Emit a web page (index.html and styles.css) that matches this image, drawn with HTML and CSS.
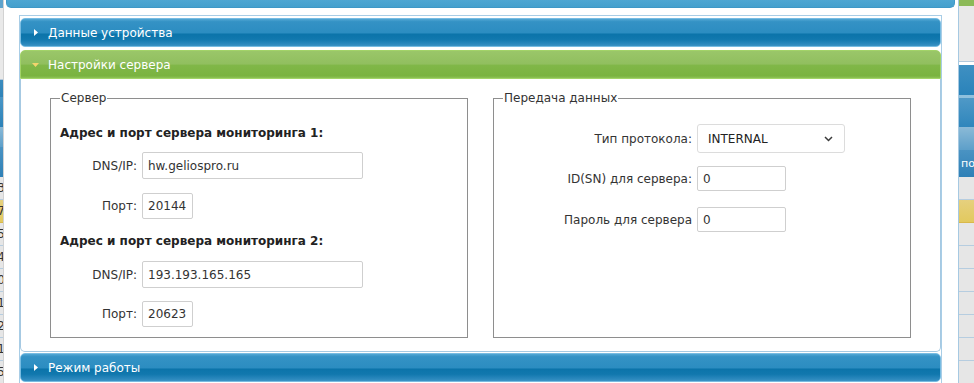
FILE: index.html
```html
<!DOCTYPE html>
<html lang="ru">
<head>
<meta charset="utf-8">
<title>Настройки сервера</title>
<link rel="stylesheet" href="styles.css">
</head>
<body>
<div class="page">
  <aside class="strip strip-left">
    <div class="s-top-blue"></div>
    <div class="s-gray s-gray-left"></div>
    <div class="s-h s-h1"></div>
    <div class="s-h s-h2"></div>
    <div class="s-h s-h3"></div>
    <div class="s-h s-h4"></div>
    <div class="s-row"><span>3</span></div>
    <div class="s-row s-yellow"><span>7</span></div>
    <div class="s-row"><span>5</span></div>
    <div class="s-row"><span>4</span></div>
    <div class="s-row"><span>0</span></div>
    <div class="s-row"><span>1</span></div>
    <div class="s-row"><span>2</span></div>
    <div class="s-row"><span>1</span></div>
    <div class="s-row"><span>5</span></div>
  </aside>

  <main class="dialog">
    <div class="titlebar"></div>
    <div class="acc">
      <div class="acc-h acc-blue">
        <span class="acc-icon"><svg width="4" height="7" viewBox="0 0 4 7"><polygon points="0,0 4,3.5 0,7" fill="#ffffff"/></svg></span>
        <span class="acc-title">Данные устройства</span>
      </div>
      <div class="acc-h acc-green">
        <span class="acc-icon"><svg width="7" height="4" viewBox="0 0 7 4"><polygon points="0,0 7,0 3.5,4" fill="#f3d46c"/></svg></span>
        <span class="acc-title">Настройки сервера</span>
      </div>
      <div class="acc-c">
        <fieldset class="fs fs-server">
          <legend>Сервер</legend>
          <div class="grp-title">Адрес и порт сервера мониторинга 1:</div>
          <div class="row row-dns row-first"><label class="lbl">DNS/IP:</label><input class="inp inp-dns" type="text" value="hw.geliospro.ru"></div>
          <div class="row row-port"><label class="lbl">Порт:</label><input class="inp inp-port" type="text" value="20144"></div>
          <div class="grp-title grp-title-2">Адрес и порт сервера мониторинга 2:</div>
          <div class="row row-dns row-first2"><label class="lbl">DNS/IP:</label><input class="inp inp-dns" type="text" value="193.193.165.165"></div>
          <div class="row row-port row-last"><label class="lbl">Порт:</label><input class="inp inp-port" type="text" value="20623"></div>
        </fieldset>
        <fieldset class="fs fs-data">
          <legend>Передача данных</legend>
          <div class="row row-sel"><label class="lbl lbl-wide">Тип протокола:</label>
            <div class="sel"><span>INTERNAL</span><svg width="9" height="6" viewBox="0 0 9 6"><path d="M1 1 L4.5 4.5 L8 1" fill="none" stroke="#3a3a3a" stroke-width="1.5"/></svg></div>
          </div>
          <div class="row row-id"><label class="lbl lbl-wide">ID(SN) для сервера:</label><input class="inp inp-small" type="text" value="0"></div>
          <div class="row row-pwd"><label class="lbl lbl-wide">Пароль для сервера</label><input class="inp inp-small" type="text" value="0"></div>
        </fieldset>
      </div>
      <div class="acc-h acc-blue acc-last">
        <span class="acc-icon"><svg width="4" height="7" viewBox="0 0 4 7"><polygon points="0,0 4,3.5 0,7" fill="#ffffff"/></svg></span>
        <span class="acc-title">Режим работы</span>
      </div>
    </div>
  </main>

  <aside class="strip strip-right">
    <div class="s-top-green"></div>
    <div class="s-gray s-gray-right"></div>
    <div class="s-gap"></div>
    <div class="s-h r-h1"></div>
    <div class="s-line"></div>
    <div class="s-h r-h2"></div>
    <div class="s-h r-h3"></div>
    <div class="s-h r-h4"><span>пос</span></div>
    <div class="s-row"></div>
    <div class="s-row s-yellow"></div>
    <div class="s-row"></div>
    <div class="s-row"></div>
    <div class="s-row"></div>
    <div class="s-row"></div>
    <div class="s-row"></div>
    <div class="s-row"></div>
    <div class="s-row"></div>
  </aside>
</div>
</body>
</html>
```
FILE: styles.css
```css
* { box-sizing: border-box; }
html, body { margin: 0; padding: 0; }
body {
  width: 974px;
  height: 383px;
  overflow: hidden;
  background: #ffffff;
  font-family: "DejaVu Sans", Verdana, sans-serif;
  font-size: 12px;
  color: #333333;
}
.page { display: flex; height: 383px; }

/* background page strips */
.strip { display: flex; flex-direction: column; overflow: hidden; flex: none; background: #e6e6e6; }
.strip-left { width: 4px; border-right: 1px solid #d2d2d2; }
.strip-right { width: 16px; border-left: 1px solid #a6c9e2; }
.s-top-blue { height: 8px; flex: none; background: #5fa3cc; }
.s-top-green { height: 6px; flex: none; background: #8cba58; }
.s-gray { flex: none; background: #e9e9e9; border-bottom: 1px solid #b3c9dc; }
.s-gray-left { height: 72px; }
.s-gray-right { height: 56px; }
.s-gap { height: 3px; flex: none; background: #ffffff; }
.s-line { height: 3px; flex: none; background: #8fc0dd; }
.s-h { flex: none; }
.s-h1 { height: 17px; background: linear-gradient(#3c8cbe, #2f83b8); }
.s-h2 { height: 30px; background: linear-gradient(#4a96c6, #2c82b8); }
.s-h3 { height: 20px; background: linear-gradient(#8ab9d7, #5d9fc9); }
.s-h4 { height: 30px; background: linear-gradient(#4a93c3, #2e80b6); }
.r-h1 { height: 30px; background: linear-gradient(#3f90c2, #2a83ba); }
.r-h2 { height: 29px; background: linear-gradient(#4f99c7, #2f86bc); }
.r-h3 { height: 23px; background: linear-gradient(#8bbad7, #5d9fc9); }
.r-h4 {
  height: 27px;
  background: linear-gradient(#4a93c3, #2e80b6);
  color: #ffffff;
  font-size: 11px;
  line-height: 27px;
  padding-left: 2px;
  white-space: nowrap;
}
.s-row {
  height: 23px;
  flex: none;
  display: flex;
  justify-content: flex-end;
  align-items: center;
  background: #e6e6e6;
  border-bottom: 1px solid #b6cde0;
  font-size: 12px;
  color: #333333;
  white-space: nowrap;
}
.strip-left .s-row span { margin-right: -2px; }
.s-yellow { background: linear-gradient(#e6d07e, #e2c95e); border-bottom-color: #d9b84a; }

/* dialog */
.dialog {
  width: 954px;
  flex: none;
  display: flex;
  flex-direction: column;
  background: #ffffff;
}
.titlebar {
  height: 8px;
  flex: none;
  margin: 0 3px 0 2px;
  background: linear-gradient(#4ea6d2, #45a0cd);
  border: 1px solid #3f98c6;
  border-top: 0;
  border-radius: 0 0 5px 5px;
}
.acc {
  flex: 1;
  margin: 7px 16px 0 15px;
  padding-top: 2px;
  border: 1px solid #a8cde6;
  border-bottom: 0;
}

.acc-h {
  height: 29px;
  display: flex;
  align-items: center;
  color: #ffffff;
  font-size: 12px;
  white-space: nowrap;
}
.acc-icon {
  width: 7px;
  margin-left: 11px;
  margin-right: 9px;
  display: flex;
  justify-content: center;
  align-items: center;
}
.acc-icon svg { display: block; }
.acc-blue {
  border: 1px solid #78bce2;
  border-radius: 5px;
  background: linear-gradient(to bottom, #52a7d4 0%, #3492c5 10%, #2c8dc1 50%, #0c74aa 57%, #1178ae 75%, #2a88bd 92%, #3b93c4 100%);
}
.acc-green {
  margin-top: 3px;
  border: 1px solid #a2d368;
  border-radius: 5px 5px 0 0;
  background: linear-gradient(to bottom, #9ac669 0%, #91bf5f 48%, #80b748 53%, #7ab340 92%, #8cc256 100%);
}
.acc-last { margin-top: 1px; }

.acc-c {
  display: grid;
  grid-template-columns: 1fr 1fr;
  column-gap: 25px;
  padding: 12px 29px 13px 29px;
  border: 1px solid #a6c9e2;
  border-top: 0;
  border-radius: 0 0 5px 5px;
}

.fs {
  margin: 0;
  padding: 0 9px 10px 9px;
  border: 1px solid #8e8e8e;
  min-width: 0;
}
.fs legend {
  padding: 0 1px;
  line-height: 14px;
  font-size: 12px;
  color: #333333;
}
.grp-title {
  margin-top: 21px;
  line-height: 14px;
  font-weight: bold;
  color: #222222;
  white-space: nowrap;
}
.grp-title-2 { margin-top: 15px; }

.row { display: flex; align-items: center; gap: 5px; }
.row-first { margin-top: 12px; }
.row-port { margin-top: 14px; }
.row-first2 { margin-top: 13px; }
.row-last { margin-top: 13px; }
.row-sel { margin-top: 19px; }
.row-id { margin-top: 13px; }
.row-pwd { margin-top: 16px; }

.lbl {
  width: 77px;
  flex: none;
  text-align: right;
  color: #333333;
  white-space: nowrap;
}
.lbl-wide { width: 189px; }

.inp {
  font-family: "DejaVu Sans", Verdana, sans-serif;
  font-size: 12px;
  color: #333333;
  background: #ffffff;
  border: 1px solid #cfcfcf;
  border-radius: 2px;
  padding: 0 5px;
  margin: 0;
  outline: none;
}
.inp-dns { width: 221px; height: 27px; }
.inp-port { width: 51px; height: 26px; }
.inp-small { width: 89px; height: 25px; }

.sel {
  width: 148px;
  height: 29px;
  display: flex;
  align-items: center;
  justify-content: space-between;
  padding: 1px 11px 0 10px;
  border: 1px solid #dcdcdc;
  border-radius: 3px;
  background: #ffffff;
  color: #222222;
}
.sel svg { display: block; }
```
